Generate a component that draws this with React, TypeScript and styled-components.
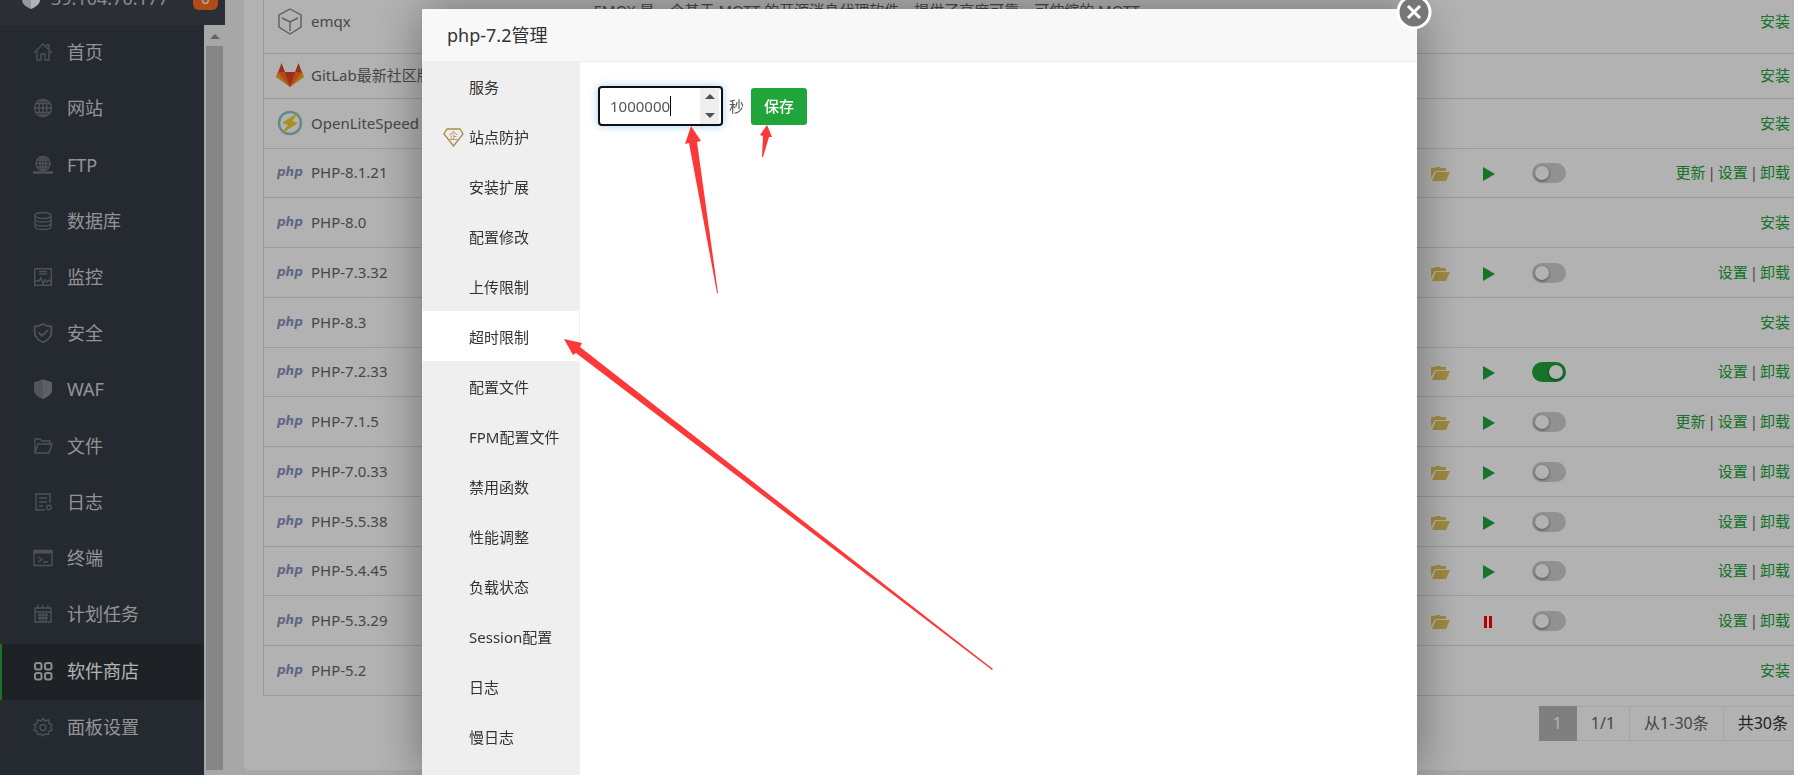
import React from 'react';
import styled, { createGlobalStyle, css } from 'styled-components';

const Global = createGlobalStyle`
  * { box-sizing: border-box; }
  html, body, #root { height: 100%; }
  body {
    margin: 0;
    overflow: hidden;
    background: #f0f0f0;
    color: #666;
    font: 15px/20px "Noto Sans", "Noto Sans CJK SC", sans-serif;
  }
  a { text-decoration: none; }
  button, input { font: inherit; }
`;

/* ---------- page frame ---------- */

const Page = styled.div`
  display: flex;
  height: 100%;
`;

const Aside = styled.aside`
  width: 225px;
  flex: none;
  display: flex;
  flex-direction: column;
`;

const Host = styled.header`
  height: 25px;
  flex: none;
  padding: 0 7px 0 22px;
  display: flex;
  align-items: flex-end;
  overflow: hidden;
  background: #3e434d;
  color: #fff;
`;

const HostAddress = styled.strong`
  flex: 1;
  margin: 0 0 15px 11px;
  font-size: 18px;
  line-height: 24px;
  font-weight: 400;
  color: #c8cacc;
`;

const HostBadge = styled.span`
  width: 25px;
  height: 24px;
  margin-bottom: 15px;
  border-radius: 6px;
  background: #fb6f25;
  font-size: 15px;
  line-height: 24px;
  text-align: center;
`;

const HostLogo = styled.svg`
  width: 18px;
  height: 20px;
  margin-bottom: 16px;
`;

const AsideBody = styled.div`
  flex: 1;
  min-height: 0;
  display: flex;
`;

const Menu = styled.nav`
  width: 204px;
  padding-bottom: 19px;
  display: grid;
  grid-auto-rows: 1fr;
  background: #353c45;
`;

const MenuLink = styled.a<{ $active?: boolean }>`
  display: flex;
  align-items: center;
  gap: 14px;
  padding: 0 0 2px 31px;
  border-left: 2px solid ${p => (p.$active ? '#20a53a' : '#3a3d3d')};
  background: ${p => (p.$active ? '#2c3036' : 'transparent')};
  color: ${p => (p.$active ? '#fff' : '#d2d3d5')};
  font-size: 18px;
  line-height: 24px;
  svg { opacity: ${p => (p.$active ? 1 : 0.4)}; }
`;

const MenuIcon = styled.svg`
  width: 20px;
  height: 20px;
  fill: none;
  stroke: #c9cbcd;
  stroke-width: 1.4;
`;

const ScrollBar = styled.div`
  flex: 1;
  display: flex;
  flex-direction: column;
  align-items: center;
  padding: 9px 0 5px;
  background: #f0f0f0;
`;

const ScrollUp = styled.svg`
  width: 10px;
  height: 5px;
  flex: none;
  margin-bottom: 7px;
  fill: #8e8e8e;
`;

const ScrollThumb = styled.div`
  flex: 1;
  width: 17px;
  background: #c1c1c1;
`;

const Main = styled.main`
  flex: 1;
  min-width: 0;
  margin: 0 0 5px 19px;
  padding-left: 19px;
  overflow: hidden;
  border-radius: 0 0 0 5px;
  background: #fff;
`;

/* ---------- software table ---------- */

const SoftTable = styled.table`
  width: 100%;
  margin-top: -10px;
  table-layout: fixed;
  border-collapse: collapse;
  border: 1px solid #ddd;
  border-right: 0;
`;

const Row = styled.tr<{ $h: number }>`
  height: ${p => p.$h}px;
  border-top: 1px solid #ddd;
`;

const Cell = styled.td`
  padding: 0;
  white-space: nowrap;
`;

const TextCell = styled(Cell)<{ $right?: boolean }>`
  padding: 0 4px 2px 0;
  text-align: ${p => (p.$right ? 'right' : 'left')};
`;

const Product = styled.div`
  display: flex;
  align-items: center;
  gap: 7px;
  padding-left: 12px;
  svg { flex: none; }
`;

const Description = styled.div`
  line-height: 22px;
`;

const Action = styled.a`
  color: #20a53a;
  & + &::before {
    content: '|';
    margin: 0 2px;
    color: #666;
  }
`;

const IconButton = styled.button`
  display: block;
  padding: 2px 0 0;
  border: 0;
  background: none;
  svg { display: block; }
`;

const Switch = styled.input`
  appearance: none;
  display: block;
  width: 34px;
  height: 20px;
  margin: 0;
  padding: 3px;
  border-radius: 10px;
  background: #d0d0d0;
  &::before {
    content: '';
    display: block;
    width: 14px;
    height: 14px;
    border-radius: 50%;
    background: #fff;
    box-shadow: 0 1px 3px rgba(0, 0, 0, 0.5);
  }
  &:checked { background: #20a53a; }
  &:checked::before { margin-left: 14px; }
`;

/* ---------- pager ---------- */

const Pager = styled.div`
  display: flex;
  justify-content: flex-end;
  margin-top: 10px;
  font-size: 16px;
`;

const PagerCell = styled.span<{ $current?: boolean; $dark?: boolean }>`
  height: 35px;
  padding: 0 14px;
  border: 1px solid #ececec;
  border-left-width: 0;
  line-height: 33px;
  color: ${p => (p.$dark ? '#333' : '#666')};
  &:last-child { padding-right: 6px; border-right: 0; }
  ${p => p.$current && css`
    background: #b6b6b6;
    border-color: #b6b6b6;
    color: #fff;
  `}
`;

/* ---------- dialog ---------- */

const Mask = styled.div`
  position: fixed;
  inset: 0;
  display: flex;
  padding: 9px 377px 0 422px;
  background: rgba(0, 0, 0, 0.3);
`;

const Dialog = styled.section`
  position: relative;
  flex: 1;
  display: flex;
  flex-direction: column;
  border-radius: 2px 2px 0 0;
  background: #fff;
  box-shadow: 1px 1px 50px rgba(0, 0, 0, 0.4);
  color: #333;
`;

const DialogTitle = styled.h2`
  margin: 0;
  height: 52px;
  padding-left: 25px;
  border-radius: 2px 2px 0 0;
  background: #f8f8f8;
  font-size: 18px;
  font-weight: 400;
  line-height: 52px;
`;

const DialogClose = styled.button`
  position: absolute;
  top: -15px;
  right: -15px;
  padding: 0;
  border: 0;
  background: none;
  svg { display: block; }
`;

const DialogBody = styled.div`
  flex: 1;
  display: flex;
`;

const Tabs = styled.nav`
  width: 158px;
  flex: none;
  border-right: 1px solid #efefef;
  background: #efefef;
`;

const Tab = styled.a<{ $active?: boolean; $icon?: boolean }>`
  display: flex;
  align-items: center;
  gap: 5px;
  height: 50px;
  padding: 2px 0 0 ${p => (p.$icon ? 21 : 47)}px;
  background: ${p => (p.$active ? '#fff' : 'transparent')};
  color: #333;
`;

const Pane = styled.form`
  flex: 1;
  display: flex;
  align-items: flex-start;
  padding: 24px 18px;
  border-top: 1px solid #eee;
`;

const NumberBox = styled.div`
  width: 125px;
  height: 40px;
  display: flex;
  border: 2px solid #101010;
  border-radius: 4px;
  background: #fff;
  box-shadow: 0 0 8px rgba(102, 175, 233, 0.6);
`;

const NumberField = styled.input`
  flex: 1;
  min-width: 0;
  padding: 0 0 0 10px;
  border: 0;
  outline: 0;
  background: none;
  color: #555;
  appearance: textfield;
  &::-webkit-inner-spin-button { display: none; }
`;

const Caret = styled.i`
  position: absolute;
  left: 248px;
  top: 87px;
  width: 1px;
  height: 20px;
  background: #000;
`;

const Spinner = styled.div`
  width: 19px;
  margin-right: 2px;
  display: flex;
  flex-direction: column;
  justify-content: space-between;
  align-items: center;
  padding: 6px 0;
  background: #efefef;
`;

const Unit = styled.label`
  padding: 0 7px 0 6px;
  line-height: 40px;
  color: #555;
`;

const Save = styled.button`
  height: 37px;
  margin-top: 2px;
  padding: 0 13px;
  border: 0;
  border-radius: 3px;
  background: #20a53a;
  color: #fff;
  font-weight: 500;
  line-height: 37px;
`;

const Arrows = styled.svg`
  position: absolute;
  left: 0;
  top: 0;
  width: 600px;
  height: 670px;
  pointer-events: none;
  fill: #fc3838;
`;

/* ---------- drawings ---------- */

const shapes: Record<string, React.ReactNode> = {
  home: <path d="M1 11 10 2l9 9M4 9.500V18h4v-6h4v6h4V9.500M14 4V3h2v4" />,
  site: <><circle cx="10" cy="10" r="8.500" /><ellipse cx="10" cy="10" rx="4" ry="8.500" /><path d="M1.500 10h17M3 5.500h14M3 14.500h14M10 1.500v17" /></>,
  ftp: <><circle cx="10" cy="8.500" r="7" /><ellipse cx="10" cy="8.500" rx="3" ry="7" /><path d="M3 8.500h14M4.500 5h11M4.500 12h11M10 1.500v14" /><path d="M0 17.500h20M7 17.500h6" strokeWidth="2.400" /></>,
  db: <><ellipse cx="10" cy="4.500" rx="8" ry="3" /><path d="M2 4.500v11c0 4 16 4 16 0v-11M2 8c0 4 16 4 16 0M2 12c0 4 16 4 16 0" /></>,
  monitor: <><path d="M1.700 1.700h16.600v16.600H1.700z" /><path d="M6 4.500h8M6 7h8" /><path d="M2 14h4l2-3 2 6 2-4 2 2 2-2 2 1" /></>,
  safe: <path d="M10 1c3 2 5 2.500 8.300 2.500V10c0 4-3.300 7-8.300 9.300C5 17 1.700 14 1.700 10V3.500C5 3.500 7 3 10 1zM5.500 9.500l3.500 3.500 6-6" strokeWidth="1.800" />,
  waf: <><path d="M10 0v20C5 18 1 15 1 11V3h2l1-1h2l1-1h2z" fill="#d8d8d8" stroke="none" /><path d="M10 0v20c5-2 9-5 9-9V3h-2l-1-1h-2l-1-1h-2z" fill="#fff" stroke="none" /></>,
  files: <path d="M2 16V3h5l2 2h8v3M2 17 5 8h14l-3 9H2z" />,
  logs: <><path d="M17 11V2H3v16h9M6 6h8M6 10h8M6 14h4" /><circle cx="16" cy="15.500" r="2.200" /></>,
  term: <><path d="M1 2.500h18v15H1zM5 9l4 2.500L5 14M10 14h5" /><path d="M1 4h18" strokeWidth="3" /></>,
  cron: <path d="M2 4h16v14H2zM2 8h16M5 1v4M10 1v4M15 1v4M5 11h10M5 14h10M7 9v8M10 9v8M13 9v8" />,
  store: <g strokeWidth="2"><rect x="2" y="2" width="6.500" height="6.500" rx="2" /><rect x="12" y="2" width="6.500" height="6.500" rx="2" /><rect x="2" y="12" width="6.500" height="6.500" rx="2" /><rect x="12" y="12" width="6.500" height="6.500" rx="2" /></g>,
  config: <><path d="M10 1.500l2 2.500 3.500-1 .500 3.500 3 1.500-1.500 2.500L19 13l-3 1.500-.500 3-3.500-.500-2 2-2-2-3.500.500-.500-3L1 13l1.500-2.500L1 8l3-1.500L4.500 3 8 4z" /><circle cx="10" cy="10.500" r="3" /></>,
};

const menu: [string, string][] = [
  ['home', '首页'], ['site', '网站'], ['ftp', 'FTP'], ['db', '数据库'], ['monitor', '监控'],
  ['safe', '安全'], ['waf', 'WAF'], ['files', '文件'], ['logs', '日志'], ['term', '终端'],
  ['cron', '计划任务'], ['store', '软件商店'], ['config', '面板设置'],
];

const PhpText = styled.text`
  font: italic 700 12px "DejaVu Sans", sans-serif;
  fill: #8892bf;
`;

const BadgeText = styled.text`
  font: 9px "Noto Sans CJK SC", sans-serif;
  fill: #b08d4f;
  stroke: none;
`;

const productIcons: Record<string, React.ReactNode> = {
  emqx: (
    <svg width="28" height="28" fill="none" stroke="#888" strokeWidth="1.400">
      <path d="M14 2l11 6v12l-11 7-11-7V8zM6 11l8 4 8-4M14 15v9" />
    </svg>
  ),
  gitlab: (
    <svg width="28" height="28">
      <path d="M5.500 2 1 14l13 12 13-12-4.500-12-3.500 9H9z" fill="#e24329" />
      <path d="M1.500 11H9l5 15zM26.500 11H19l-5 15z" fill="#fc6d26" />
      <path d="M1.500 11 0 16l14 10zM26.500 11l1.500 5-14 10z" fill="#fca326" />
    </svg>
  ),
  litespeed: (
    <svg width="28" height="28">
      <circle cx="14" cy="14" r="11" fill="none" stroke="#8fc4c6" strokeWidth="2.400" />
      <path d="M23 3 6 14l6 2-7 9 17-11-6-2z" fill="#f0d02d" />
    </svg>
  ),
  php: (
    <svg width="28" height="20">
      <PhpText x="1" y="14">php</PhpText>
    </svg>
  ),
};

interface Soft {
  name: string;
  icon?: string;
  h?: number;
  state?: 'run' | 'stop';
  on?: boolean;
  update?: boolean;
}

const softs: Soft[] = [
  { name: 'emqx', icon: 'emqx', h: 63 },
  { name: 'GitLab最新社区版', icon: 'gitlab', h: 45 },
  { name: 'OpenLiteSpeed', icon: 'litespeed' },
  { name: 'PHP-8.1.21', h: 49, state: 'run', update: true },
  { name: 'PHP-8.0' },
  { name: 'PHP-7.3.32', state: 'run' },
  { name: 'PHP-8.3' },
  { name: 'PHP-7.2.33', h: 49, state: 'run', on: true },
  { name: 'PHP-7.1.5', state: 'run', update: true },
  { name: 'PHP-7.0.33', state: 'run' },
  { name: 'PHP-5.5.38', state: 'run' },
  { name: 'PHP-5.4.45', h: 49, state: 'run' },
  { name: 'PHP-5.3.29', state: 'stop' },
  { name: 'PHP-5.2' },
];

const tabs = ['服务', '站点防护', '安装扩展', '配置修改', '上传限制', '超时限制', '配置文件', 'FPM配置文件',
  '禁用函数', '性能调整', '负载状态', 'Session配置', '日志', '慢日志'];

function actionsOf(soft: Soft) {
  if (!soft.state) return ['安装'];
  return soft.update ? ['更新', '设置', '卸载'] : ['设置', '卸载'];
}

function SoftRow({ soft }: { soft: Soft }) {
  return (
    <Row $h={soft.h ?? 50}>
      <TextCell><Product>{productIcons[soft.icon ?? 'php']}{soft.name}</Product></TextCell>
      <TextCell>
        {soft.name === 'emqx' && (
          <Description>EMQX 是一个基于 MQTT 的开源消息代理软件，提供了高度可靠、可伸缩的 MQTT<br />消息服务</Description>
        )}
      </TextCell>
      <Cell>
        {soft.state && (
          <IconButton aria-label="目录">
            <svg width="20" height="16" fill="#e5c85a">
              <path d="M1 2h4l1-1h4l1 1h5v3H5L1 12zM6 6h14l-4 9H2z" />
            </svg>
          </IconButton>
        )}
      </Cell>
      <Cell>
        {soft.state && (
          <IconButton aria-label="状态">
            {soft.state === 'run'
              ? <svg width="12" height="14" fill="#20a53a"><path d="M0 0l12 7-12 7z" /></svg>
              : <svg width="12" height="14" fill="#f00"><path d="M1 1h3v12H1zM6 1h3v12H6z" /></svg>}
          </IconButton>
        )}
      </Cell>
      <Cell>{soft.state && <Switch type="checkbox" aria-label="首页显示" defaultChecked={soft.on} />}</Cell>
      <TextCell $right>
        {actionsOf(soft).map(a => <Action key={a} href="#">{a}</Action>)}
      </TextCell>
    </Row>
  );
}

export default function App() {
  return (
    <>
      <Global />
      <Page>
        <Aside>
          <Host>
            <HostLogo viewBox="0 0 18 20">
              <path d="M9 0v20c-5-2-9-5-9-9V3z" fill="#d8d8d8" />
              <path d="M9 0v20c5-2 9-5 9-9V3z" fill="#fff" />
            </HostLogo>
            <HostAddress>39.104.70.177</HostAddress>
            <HostBadge>0</HostBadge>
          </Host>
          <AsideBody>
            <Menu>
              {menu.map(([icon, label]) => (
                <MenuLink key={icon} href="#" $active={icon === 'store'}>
                  <MenuIcon viewBox="0 0 20 20">{shapes[icon]}</MenuIcon>
                  {label}
                </MenuLink>
              ))}
            </Menu>
            <ScrollBar>
              <ScrollUp viewBox="0 0 10 5"><path d="M0 5l5-5 5 5z" /></ScrollUp>
              <ScrollThumb />
            </ScrollBar>
          </AsideBody>
        </Aside>
        <Main>
          <SoftTable>
            <colgroup>
              <col style={{ width: 330 }} />
              <col />
              <col style={{ width: 53 }} />
              <col style={{ width: 49 }} />
              <col style={{ width: 110 }} />
              <col style={{ width: 152 }} />
            </colgroup>
            <tbody>{softs.map(s => <SoftRow key={s.name} soft={s} />)}</tbody>
          </SoftTable>
          <Pager>
            <PagerCell $current>1</PagerCell>
            <PagerCell>1/1</PagerCell>
            <PagerCell>从1-30条</PagerCell>
            <PagerCell $dark>共30条</PagerCell>
          </Pager>
        </Main>
      </Page>
      <Mask>
        <Dialog role="dialog" aria-label="php-7.2管理">
          <DialogTitle>php-7.2管理</DialogTitle>
          <DialogClose aria-label="关闭">
            <svg width="36" height="36">
              <circle cx="18" cy="18" r="16" fill="#777" stroke="#fff" strokeWidth="3" />
              <path d="M12 12l12 12M24 12l-12 12" stroke="#fff" strokeWidth="3" />
            </svg>
          </DialogClose>
          <DialogBody>
            <Tabs>
              {tabs.map(t => (
                <Tab key={t} href="#" $active={t === '超时限制'} $icon={t === '站点防护'}>
                  {t === '站点防护' && (
                    <svg width="21" height="19" fill="none" stroke="#b08d4f" strokeWidth="1.400">
                      <path d="M4 1h13l3 5-9.500 12L1 6z" />
                      <BadgeText x="6" y="11">企</BadgeText>
                    </svg>
                  )}
                  {t}
                </Tab>
              ))}
            </Tabs>
            <Pane onSubmit={e => e.preventDefault()}>
              <NumberBox>
                <NumberField id="timeout" type="number" defaultValue={1000000} />
                <Spinner>
                  <svg width="10" height="5" fill="#505050"><path d="M0 5l5-5 5 5z" /></svg>
                  <svg width="10" height="5" fill="#505050"><path d="M0 0l5 5 5-5z" /></svg>
                </Spinner>
              </NumberBox>
              <Unit htmlFor="timeout">秒</Unit>
              <Save>保存</Save>
            </Pane>
          </DialogBody>
          <Caret />
          <Arrows viewBox="422 9 600 670">
            <path d="M691 126L685 144L689 143L717 293L718 293L697 142L701 141Z" />
            <path d="M767 125L760 135L763 136L762 157L763 157L769 137L772 137Z" />
            <path d="M564 339L573 355L576 353L992 670L993 669L580 347L582 343Z" />
          </Arrows>
        </Dialog>
      </Mask>
    </>
  );
}
